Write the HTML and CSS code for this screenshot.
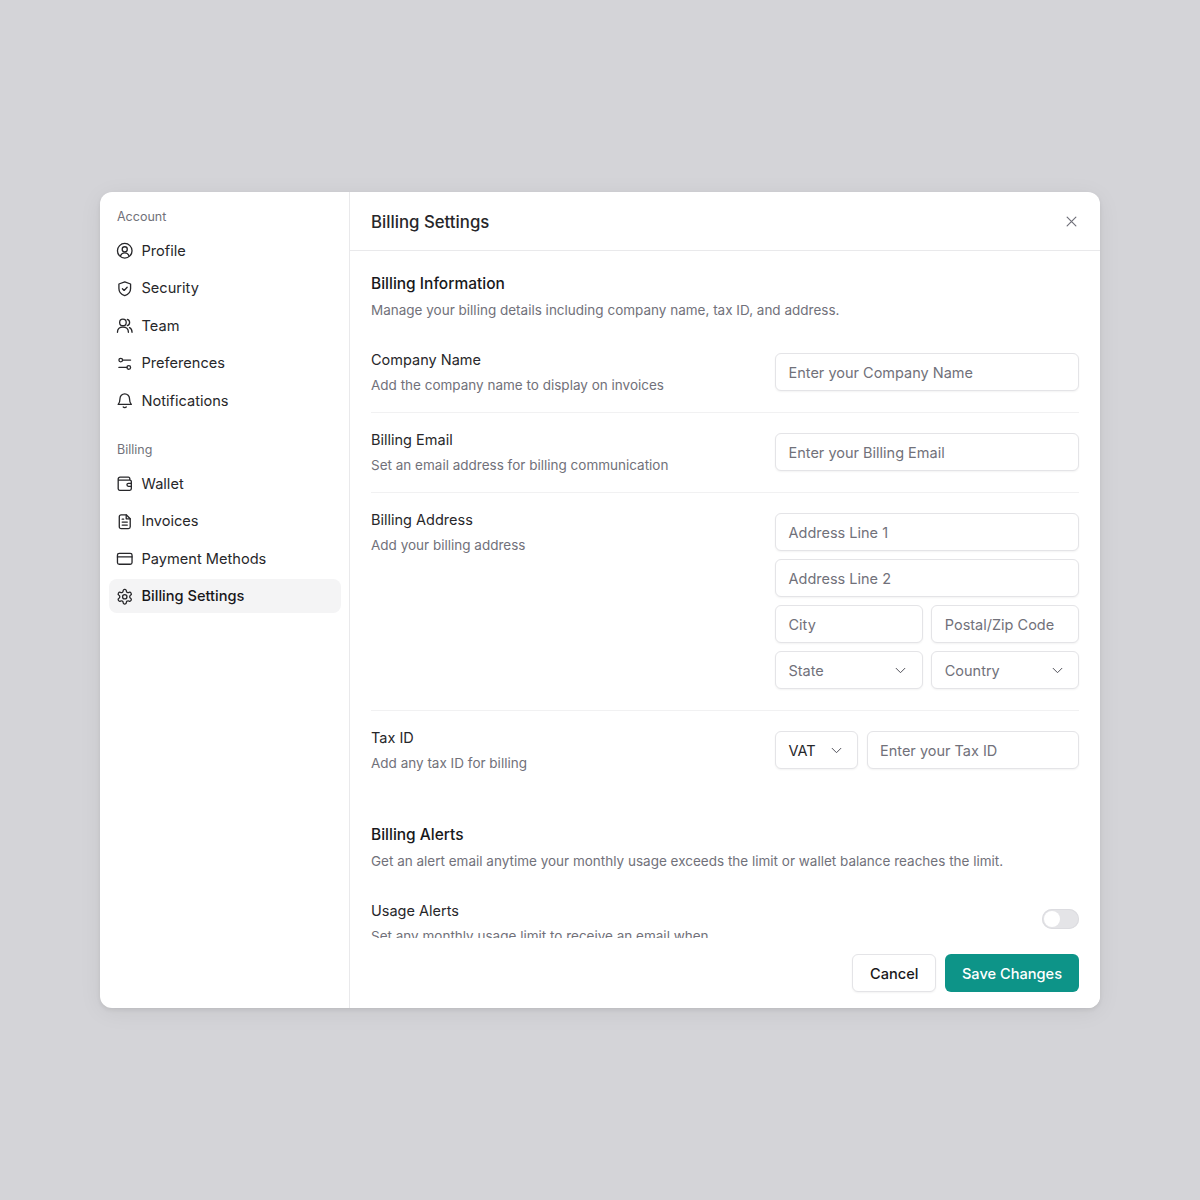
FILE: index.html
```html
<!DOCTYPE html>
<html lang="en">
<head>
<meta charset="utf-8">
<title>Billing Settings</title>
<link rel="stylesheet" href="styles.css">
</head>
<body>
<div class="modal">
  <aside class="sidebar">
    <div class="nav-label">Account</div>
    <nav class="nav-group">
      <a class="nav-item"><svg class="icon" viewBox="0 0 24 24"><circle cx="12" cy="12" r="10"/><circle cx="12" cy="10" r="3.500"/><path d="M6.200 19.200c.9-2.900 3-4.200 5.800-4.200s4.900 1.300 5.800 4.200"/></svg>Profile</a>
      <a class="nav-item"><svg class="icon" viewBox="0 0 24 24"><path d="M12 2.500l8 3v6.200c0 5-3.400 8.300-8 9.800-4.600-1.500-8-4.800-8-9.800V5.500z"/><path d="M8.800 12l2.300 2.300 4.200-4.300"/></svg>Security</a>
      <a class="nav-item"><svg class="icon" viewBox="0 0 24 24"><circle cx="9.500" cy="7.500" r="4.500"/><path d="M2 21c0-4.400 3.200-7 7.500-7s7.500 2.600 7.500 7"/><path d="M15.500 3.200a4.500 4.500 0 0 1 0 8.600"/><path d="M18.500 14.500c2.200.9 3.500 3 3.500 6.500"/></svg>Team</a>
      <a class="nav-item"><svg class="icon" viewBox="0 0 24 24"><circle cx="6.500" cy="7" r="2.500"/><circle cx="17.500" cy="17" r="2.500"/><path d="M9 7h11M4 17h11"/></svg>Preferences</a>
      <a class="nav-item"><svg class="icon" viewBox="0 0 24 24"><path d="M12 2.500c-3.700 0-6.500 2.900-6.500 6.500 0 5-1.300 6.600-2.500 8h18c-1.200-1.400-2.500-3-2.500-8 0-3.600-2.800-6.500-6.500-6.500z"/><path d="M9.800 20.500c.5.700 1.300 1 2.200 1s1.700-.3 2.200-1"/></svg>Notifications</a>
    </nav>
    <div class="nav-label nav-label-second">Billing</div>
    <nav class="nav-group">
      <a class="nav-item"><svg class="icon" viewBox="0 0 24 24"><path d="M19 7V5a2 2 0 0 0-2-2H5.500A2.500 2.500 0 0 0 3 5.500V19a2 2 0 0 0 2 2h14a2 2 0 0 0 2-2V9a2 2 0 0 0-2-2H3"/><path d="M21 11.500h-4a2 2 0 0 0 0 4h4"/></svg>Wallet</a>
      <a class="nav-item"><svg class="icon" viewBox="0 0 24 24"><path d="M14 2.500H7a2.500 2.500 0 0 0-2.500 2.500v14A2.500 2.500 0 0 0 7 21.500h10a2.500 2.500 0 0 0 2.500-2.500V8z"/><path d="M14 2.500V8h5.500"/><path d="M8.500 12.500h7M8.500 16.500h7M8.500 8.500h2"/></svg>Invoices</a>
      <a class="nav-item"><svg class="icon" viewBox="0 0 24 24"><rect x="2" y="4.500" width="20" height="15" rx="2.500"/><path d="M2 9.500h20"/></svg>Payment Methods</a>
      <a class="nav-item is-active"><svg class="icon" viewBox="0 0 24 24"><path d="M12.220 2h-.44a2 2 0 0 0-2 2v.18a2 2 0 0 1-1 1.730l-.43.25a2 2 0 0 1-2 0l-.15-.08a2 2 0 0 0-2.730.73l-.22.38a2 2 0 0 0 .73 2.730l.15.1a2 2 0 0 1 1 1.720v.51a2 2 0 0 1-1 1.740l-.15.09a2 2 0 0 0-.73 2.730l.22.38a2 2 0 0 0 2.730.73l.15-.08a2 2 0 0 1 2 0l.43.25a2 2 0 0 1 1 1.730V20a2 2 0 0 0 2 2h.44a2 2 0 0 0 2-2v-.18a2 2 0 0 1 1-1.730l.43-.25a2 2 0 0 1 2 0l.15.08a2 2 0 0 0 2.730-.73l.22-.39a2 2 0 0 0-.73-2.730l-.15-.08a2 2 0 0 1-1-1.740v-.5a2 2 0 0 1 1-1.740l.15-.09a2 2 0 0 0 .73-2.730l-.22-.38a2 2 0 0 0-2.730-.73l-.15.08a2 2 0 0 1-2 0l-.43-.25a2 2 0 0 1-1-1.730V4a2 2 0 0 0-2-2z"/><circle cx="12" cy="12" r="3"/></svg>Billing Settings</a>
    </nav>
  </aside>
  <main class="main">
    <header class="header">
      <h1 class="title">Billing Settings</h1>
      <svg class="close" viewBox="0 0 24 24"><path d="M5 5l14 14M19 5L5 19"/></svg>
    </header>
    <div class="content">
      <section class="section">
        <h2 class="section-title">Billing Information</h2>
        <p class="muted section-desc">Manage your billing details including company name, tax ID, and address.</p>
        <div class="row row-first">
          <div class="row-text"><div class="row-title">Company Name</div><p class="muted row-desc">Add the company name to display on invoices</p></div>
          <div class="fields"><div class="field">Enter your Company Name</div></div>
        </div>
        <div class="row">
          <div class="row-text"><div class="row-title">Billing Email</div><p class="muted row-desc">Set an email address for billing communication</p></div>
          <div class="fields"><div class="field">Enter your Billing Email</div></div>
        </div>
        <div class="row">
          <div class="row-text"><div class="row-title">Billing Address</div><p class="muted row-desc">Add your billing address</p></div>
          <div class="fields">
            <div class="field">Address Line 1</div>
            <div class="field">Address Line 2</div>
            <div class="field-pair"><div class="field">City</div><div class="field">Postal/Zip Code</div></div>
            <div class="field-pair">
              <div class="field field-select">State<svg class="chevron" viewBox="0 0 24 24"><path d="M5 8.500l7 7 7-7"/></svg></div>
              <div class="field field-select">Country<svg class="chevron" viewBox="0 0 24 24"><path d="M5 8.500l7 7 7-7"/></svg></div>
            </div>
          </div>
        </div>
        <div class="row row-last">
          <div class="row-text"><div class="row-title">Tax ID</div><p class="muted row-desc">Add any tax ID for billing</p></div>
          <div class="fields tax">
            <div class="field field-select field-vat">VAT<svg class="chevron" viewBox="0 0 24 24"><path d="M5 8.500l7 7 7-7"/></svg></div>
            <div class="field field-grow">Enter your Tax ID</div>
          </div>
        </div>
      </section>
      <section class="section section-alerts">
        <h2 class="section-title">Billing Alerts</h2>
        <p class="muted section-desc">Get an alert email anytime your monthly usage exceeds the limit or wallet balance reaches the limit.</p>
        <div class="alert-row">
          <div class="row-text"><div class="row-title">Usage Alerts</div><p class="muted row-desc">Set any monthly usage limit to receive an email when</p></div>
          <span class="toggle"><span class="knob"></span></span>
        </div>
      </section>
    </div>
    <footer class="footer">
      <button class="btn btn-cancel">Cancel</button>
      <button class="btn btn-save">Save Changes</button>
    </footer>
  </main>
</div>
</body>
</html>
```
FILE: styles.css
```css
* { box-sizing: border-box; }
html, body { margin: 0; height: 100%; }
body {
  background: #d4d4d8;
  font-family: Inter, "Noto Sans", sans-serif;
  color: #18181b;
  display: flex;
  align-items: center;
  justify-content: center;
  height: 1200px;
}
h1, h2, p { margin: 0; font-weight: 400; }
.modal {
  width: 1000px;
  height: 816px;
  background: #fff;
  border-radius: 12px;
  display: flex;
  overflow: hidden;
  box-shadow: 0 2px 4px rgba(0, 0, 0, .08), 0 4px 24px rgba(0, 0, 0, .06);
}
.sidebar {
  width: 250px;
  flex: none;
  border-right: 1px solid #e9e9eb;
  padding: 16px 8.500px;
}
.nav-label {
  font-size: 12.500px;
  line-height: 18px;
  color: #71717a;
  padding-left: 8.500px;
}
.nav-label-second { margin-top: 20px; }
.nav-group { display: flex; flex-direction: column; margin-top: 7.500px; }
.nav-item {
  height: 33.500px;
  margin-bottom: 4px;
  display: flex;
  align-items: center;
  gap: 8px;
  padding: 1px 0 0 7.500px;
  border-radius: 8px;
  font-size: 14.600px;
  color: #27272a;
}
.nav-item.is-active { background: #f4f4f5; font-weight: 500; color: #18181b; }
.icon {
  width: 17.500px;
  height: 17.500px;
  flex: none;
  fill: none;
  stroke: #27272a;
  stroke-width: 1.800;
  stroke-linecap: round;
  stroke-linejoin: round;
}
.main { flex: 1; min-width: 0; display: flex; flex-direction: column; }
.header {
  height: 59px;
  flex: none;
  border-bottom: 1px solid #e9e9eb;
  padding: 0 21px;
  display: flex;
  align-items: center;
  justify-content: space-between;
}
.title { font-size: 16.800px; font-weight: 500; color: #27272a; padding-top: 1px; }
.close { width: 15px; height: 15px; fill: none; stroke: #71717a; stroke-width: 1.900; stroke-linecap: round; }
.content { flex: 1; min-height: 0; overflow: hidden; padding: 21px 21px 0; }
.section-title { font-size: 15.500px; line-height: 24px; font-weight: 500; color: #18181b; }
.muted { color: #71717a; font-size: 13.500px; line-height: 18px; }
.section-desc { margin-top: 5px; }
.row {
  display: flex;
  justify-content: space-between;
  padding: 20.500px 0 21px;
  border-bottom: 1px solid #f1f1f2;
}
.row-first { margin-top: 13.500px; }
.row-last { border-bottom: 0; }
.row-text { width: 345px; margin-bottom: -4px; }
.row-title { font-size: 14.500px; line-height: 20px; color: #27272a; margin-top: -3px; }
.row-desc { margin-top: 6px; }
.fields { width: 304px; display: flex; flex-direction: column; gap: 8.500px; }
.field-pair { display: flex; gap: 8.500px; }
.field-pair .field { flex: 1; min-width: 0; }
.field {
  height: 37.500px;
  border: 1px solid #e4e4e7;
  border-radius: 6px;
  padding: 1px 12.500px 0;
  display: flex;
  align-items: center;
  font-size: 14.500px;
  color: #71717a;
  box-shadow: 0 1px 2px rgba(0, 0, 0, .05);
  background: #fff;
}
.field-select { justify-content: space-between; padding-right: 13.500px; }
.chevron { width: 15px; height: 15px; fill: none; stroke: #52525b; stroke-width: 1.600; stroke-linecap: round; stroke-linejoin: round; }
.tax { flex-direction: row; }
.field-vat { width: 83px; flex: none; color: #27272a; }
.field-grow { flex: 1; min-width: 0; }
.section-alerts { margin-top: 33.500px; }
.alert-row { display: flex; justify-content: space-between; margin-top: 33.500px; }
.toggle {
  width: 37.500px;
  height: 20.500px;
  border-radius: 11px;
  background: #e4e4e7;
  padding: 2px;
  margin-top: 5px;
  box-shadow: inset 0 0 0 1px #dcdce0;
}
.knob { display: block; width: 16.500px; height: 16.500px; border-radius: 50%; background: #fff; }
.footer {
  height: 70px;
  flex: none;
  padding: 16px 21px;
  display: flex;
  justify-content: flex-end;
  gap: 8.500px;
  background: #fff;
}
.btn {
  height: 38px;
  border-radius: 6px;
  font-family: inherit;
  font-size: 14.600px;
  font-weight: 500;
  padding: 1px 17px 0;
  border: 1px solid transparent;
}
.btn-cancel { background: #fff; border-color: #e4e4e7; color: #18181b; box-shadow: 0 1px 2px rgba(0, 0, 0, .05); }
.btn-save { background: #0d9488; color: #fff; padding: 1px 16px 0; }
```
